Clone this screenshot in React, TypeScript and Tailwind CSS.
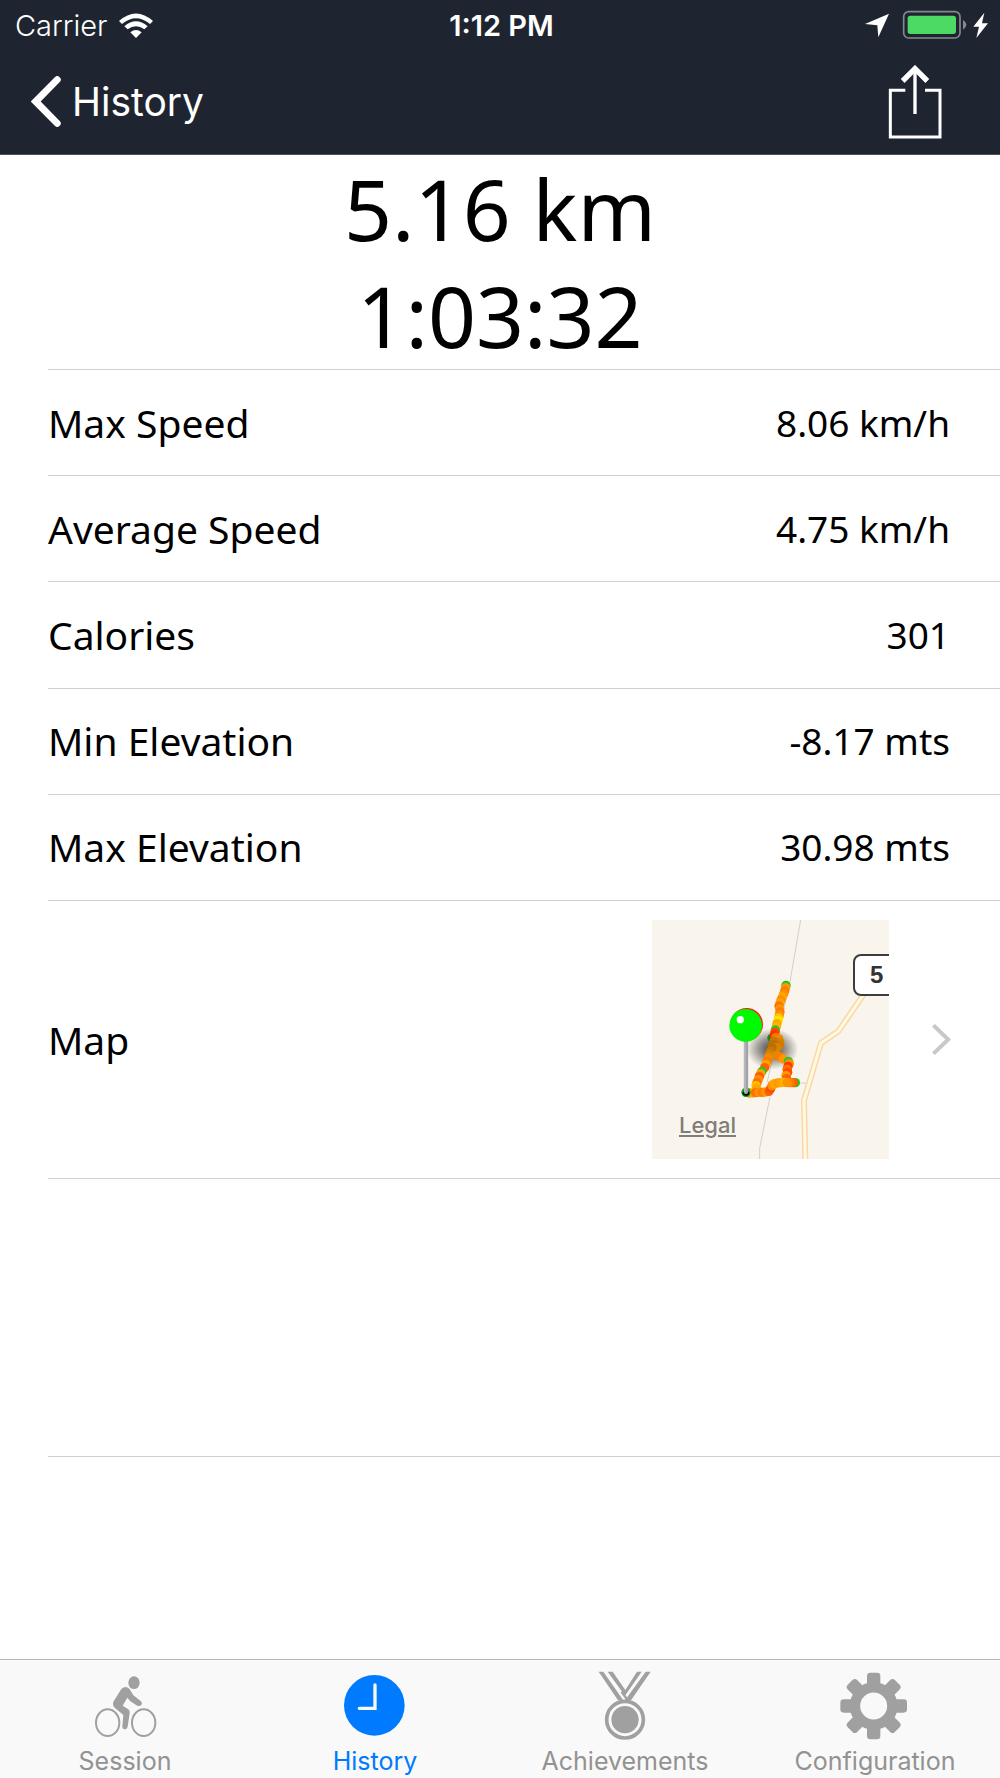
import type { ReactNode } from 'react'
import clsx from 'clsx'

const stats = [
  { label: 'Max Speed', value: '8.06 km/h' },
  { label: 'Average Speed', value: '4.75 km/h' },
  { label: 'Calories', value: '301' },
  { label: 'Min Elevation', value: '-8.17 mts' },
  { label: 'Max Elevation', value: '30.98 mts' },
]

// x, y, colour of the speed samples along the route
const samples: [number, number, string][] = [
  [438, 226, '#1fc41f'], [437, 233, '#ff9800'], [434, 243, '#ff7b00'], [431, 252, '#ff9000'], [427, 261, '#ffa500'],
  [423, 270, '#ff8c00'], [420, 279, '#ffa500'], [417, 288, '#ff7000'], [419, 297, '#ff9800'], [420, 306, '#ff7b00'],
  [418, 315, '#ff9000'], [416, 324, '#ffc800'], [415, 331, '#ffe600'], [411, 341, '#ffa500'], [409, 350, '#ffb400'],
  [406, 360, '#2ec42e'], [405, 367, '#ff4a00'], [396, 384, '#128a12'], [403, 375, '#ff3000'], [408, 382, '#ff7000'],
  [416, 386, '#f08c00'], [419, 396, '#d98200'], [418, 406, '#d07c00'], [402, 394, '#c87800'], [399, 403, '#b87000'],
  [410, 413, '#d98200'], [396, 413, '#b87000'], [392, 424, '#c87800'], [389, 434, '#d98200'], [385, 444, '#f08c00'],
  [381, 454, '#ff7b00'], [378, 464, '#ffa500'], [374, 473, '#ff6000'], [366, 484, '#2ec42e'], [362, 491, '#ffa000'],
  [358, 500, '#ff5a00'], [355, 509, '#ff9000'], [351, 518, '#ff7000'], [348, 527, '#ffc000'], [350, 535, '#ffa500'],
  [411, 436, '#e08a00'], [420, 441, '#ff7b00'], [430, 447, '#ff9800'], [445, 454, '#2ec42e'], [448, 461, '#ff8c00'],
  [444, 469, '#ff3c00'], [441, 478, '#ff7000'], [443, 487, '#ff4a00'], [438, 497, '#ff9800'], [440, 506, '#ff6000'],
  [320, 547, '#2ec42e'], [327, 549, '#ff9000'], [337, 549, '#ffa500'], [347, 548, '#ff7000'], [357, 547, '#ff9000'],
  [367, 547, '#ff7b00'], [377, 546, '#ff9800'], [387, 544, '#ff6000'], [392, 536, '#ff4a00'], [396, 527, '#ff9000'],
  [403, 521, '#ffa500'], [413, 519, '#ff9800'], [423, 518, '#ffa500'], [433, 517, '#ffb400'], [466, 518, '#1fc41f'],
  [460, 518, '#ff6000'], [450, 518, '#ff7b00'], [442, 518, '#ff9000'],
]

function WifiIcon() {
  return (
    <svg viewBox="362 35 102 75" className="h-[25px] w-[34px]" fill="white" aria-hidden="true">
      <path d="M362 59Q413 14 464 59L455 68Q413 34 371 68Z" />
      <path d="M378 75Q413 45 448 75L438 84Q413 65 388 84Z" />
      <path d="M396 93Q413 79 430 93L413 110Z" />
    </svg>
  )
}

function StatusIcons() {
  return (
    <svg viewBox="1095 28 369 90" className="h-[30px] w-[123px]" aria-hidden="true">
      <path d="M1167 39L1135 110L1132 74L1095 70Z" fill="white" />
      <rect x="1211" y="33" width="169" height="79" rx="15" fill="none" stroke="#85888e" strokeWidth="5" />
      <rect x="1223" y="45" width="145" height="55" rx="8" fill="#4cd964" />
      <path d="M1389 58Q1399 64 1399 72T1389 87Z" fill="#85888e" />
      <path d="M1453 36L1420 78H1437L1429 112L1464 68H1446Z" fill="white" />
    </svg>
  )
}

function ShareIcon() {
  return (
    <svg viewBox="1165 193 162 222" className="h-[74px] w-[54px]" fill="none" stroke="white" aria-hidden="true">
      <path d="M1217 269H1172V409H1321V269H1276" strokeWidth="9" />
      <path d="M1246 340V206" strokeWidth="10" />
      <path d="M1209 241L1246 204L1283 241" strokeWidth="16" />
    </svg>
  )
}

function RouteMap() {
  return (
    <div className="relative h-[239px] w-[237px] overflow-hidden bg-[#f9f5ed]">
      <svg viewBox="36 30 711 717" className="h-full w-full" fill="none" aria-hidden="true">
        <defs>
          <radialGradient id="shade">
            <stop offset="0" stopColor="#000" stopOpacity="0.75" />
            <stop offset="0.5" stopColor="#000" stopOpacity="0.4" />
            <stop offset="1" stopColor="#000" stopOpacity="0" />
          </radialGradient>
        </defs>
        <path d="M482 30L450 215L382 515L505 520M390 560L359 715V747" stroke="#d2cfc9" strokeWidth="3" />
        <path d="M690 225L595 364L543 399L492 572L496 747" stroke="#fad6aa" strokeWidth="18" strokeLinejoin="round" />
        <path d="M690 225L595 364L543 399L492 572L496 747" stroke="#fffadc" strokeWidth="9" strokeLinejoin="round" />
        <ellipse cx="397" cy="417" rx="78" ry="62" fill="url(#shade)" />
        {samples.map(([x, y, color], i) => (
          <circle key={i} cx={x} cy={y} r="14" fill={color} />
        ))}
        <circle cx="318" cy="547" r="14" fill="#119c2b" />
        <ellipse cx="318" cy="550" rx="10" ry="7" fill="black" />
        <path d="M318 390V546" stroke="#a0a2a8" strokeWidth="13" strokeLinecap="round" />
        <path d="M315 395V546" stroke="#bfc0c5" strokeWidth="4" />
        <circle cx="320" cy="343" r="49" fill="#ff1a1a" />
        <circle cx="317" cy="346" r="49" fill="#00fa00" />
        <circle cx="301" cy="329" r="11" fill="white" />
      </svg>
      <span className="absolute top-[34px] left-[201px] flex h-[42px] w-[46px] items-center rounded-lg border-2 border-[#3c3c3c] bg-white pl-[15px] font-['Liberation_Sans',sans-serif] text-2xl font-bold text-[#333]">
        5
      </span>
      <a
        href="#legal"
        className="absolute bottom-5 left-[27px] font-[Inter,sans-serif] text-[22px] leading-7 font-medium text-[#7f7d79] underline decoration-2 underline-offset-2"
      >
        Legal
      </a>
    </div>
  )
}

function SessionIcon() {
  return (
    <svg viewBox="90 63 210 210" className="size-[70px]" fill="none" stroke="#a0a0a0" aria-hidden="true">
      <ellipse cx="143" cy="218" rx="35" ry="40" strokeWidth="6" />
      <ellipse cx="251" cy="218" rx="35" ry="40" strokeWidth="6" />
      <ellipse cx="222" cy="98" rx="17" ry="19" fill="#a0a0a0" stroke="none" />
      <path
        d="M184 117Q197 105 208 116L220 136L242 153Q249 160 243 166Q239 170 232 167L211 154L202 143L188 167L205 178Q210 182 209 190L203 230Q201 238 194 238Q186 237 187 228L190 195L165 174Q155 165 161 154Z"
        fill="#a0a0a0"
        stroke="none"
      />
    </svg>
  )
}

function ClockIcon() {
  return (
    <svg viewBox="840 63 210 210" className="size-[70px]" fill="none" aria-hidden="true">
      <circle cx="943" cy="166" r="91" fill="#007aff" />
      <path d="M945 105V175H898" stroke="#f9f9f9" strokeWidth="10" strokeLinecap="round" />
    </svg>
  )
}

function MedalIcon() {
  return (
    <svg viewBox="270 63 210 210" className="size-[70px]" fill="#a0a0a0" aria-hidden="true">
      <path d="M296 65H310L370 151H354Z" />
      <path d="M323 65H338L376 120L411 65H425L375 137Z" />
      <path d="M437 65H452L393 151H375Z" />
      <path d="M366 124L389 151H379L362 128Z" />
      <circle cx="375" cy="209" r="55" fill="none" stroke="#a0a0a0" strokeWidth="11" />
      <circle cx="375" cy="209" r="41" />
    </svg>
  )
}

function GearIcon() {
  return (
    <svg viewBox="1020 63 210 210" className="size-[70px]" fill="#a0a0a0" aria-hidden="true">
      <circle cx="1121" cy="168" r="56" fill="none" stroke="#a0a0a0" strokeWidth="31" />
      {[0, 45, 90, 135].map((deg) => (
        <g key={deg} transform={`rotate(${deg} 1121 168)`}>
          <rect x="1101" y="68" width="40" height="44" rx="10" />
          <rect x="1101" y="224" width="40" height="44" rx="10" />
        </g>
      ))}
    </svg>
  )
}

const tabs: { name: string; icon: ReactNode }[] = [
  { name: 'Session', icon: <SessionIcon /> },
  { name: 'History', icon: <ClockIcon /> },
  { name: 'Achievements', icon: <MedalIcon /> },
  { name: 'Configuration', icon: <GearIcon /> },
]

export default function App() {
  return (
    <div className="flex min-h-screen flex-col bg-white text-black">
      <header className="border-b border-[#4c4f5c] bg-[#1f2530] font-[Inter,sans-serif] text-white">
        <div className="grid h-[50px] grid-cols-3 items-center pr-3 pl-[15px] text-[29px] leading-none">
          <div className="flex items-center gap-3">
            <span className="font-light">Carrier</span>
            <WifiIcon />
          </div>
          <span className="text-center font-semibold">1:12 PM</span>
          <div className="flex justify-end">
            <StatusIcons />
          </div>
        </div>
        <div className="flex h-[104px] items-center justify-between pr-[58px] pb-px pl-[31px]">
          <button type="button" className="flex items-center gap-[11px] text-[39px] leading-none">
            <svg viewBox="92 228 90 154" className="h-[51px] w-[30px]" fill="none" stroke="white" aria-hidden="true">
              <path d="M171 239L106 305L171 371" strokeWidth="21" strokeLinecap="round" />
            </svg>
            History
          </button>
          <button type="button" aria-label="Share">
            <ShareIcon />
          </button>
        </div>
      </header>

      <main className="flex-1 pl-12 font-['Noto_Sans',sans-serif] text-[39px] leading-none">
        <div className="border-b border-[#d0d0d2] pr-12 text-center text-[84px] leading-[107px]">
          <p>5.16 km</p>
          <p>1:03:32</p>
        </div>
        <dl className="grid min-h-[531px] auto-rows-fr">
          {stats.map((s) => (
            <div key={s.label} className="flex items-center justify-between border-b border-[#d0d0d2] pr-[50px] pb-px">
              <dt>{s.label}</dt>
              <dd className="text-[37px]">{s.value}</dd>
            </div>
          ))}
        </dl>
        <div className="flex h-[278px] items-center border-b border-[#d0d0d2] pr-[49px] pb-px">
          <span className="flex-1">Map</span>
          <RouteMap />
          <button type="button" aria-label="Open map" className="ml-[43px]">
            <svg viewBox="878 343 57 94" className="h-[31px] w-[19px]" fill="none" stroke="#c7c7cc" aria-hidden="true">
              <path d="M882 347L927 390L882 433" strokeWidth="12" />
            </svg>
          </button>
        </div>
        <div className="h-[278px] border-b border-[#d0d0d2]" />
      </main>

      <nav className="grid grid-cols-4 border-t border-[#b8b8b8] bg-[#f9f9f9] pt-[11px] pb-[3px] font-[Inter,sans-serif] text-[25px] leading-7">
        {tabs.map((tab) => (
          <a
            key={tab.name}
            href={`#${tab.name.toLowerCase()}`}
            className={clsx(
              'flex flex-col items-center gap-[6px]',
              tab.name === 'History' ? 'text-[#007aff]' : 'text-[#929292]',
            )}
          >
            {tab.icon}
            {tab.name}
          </a>
        ))}
      </nav>
    </div>
  )
}
